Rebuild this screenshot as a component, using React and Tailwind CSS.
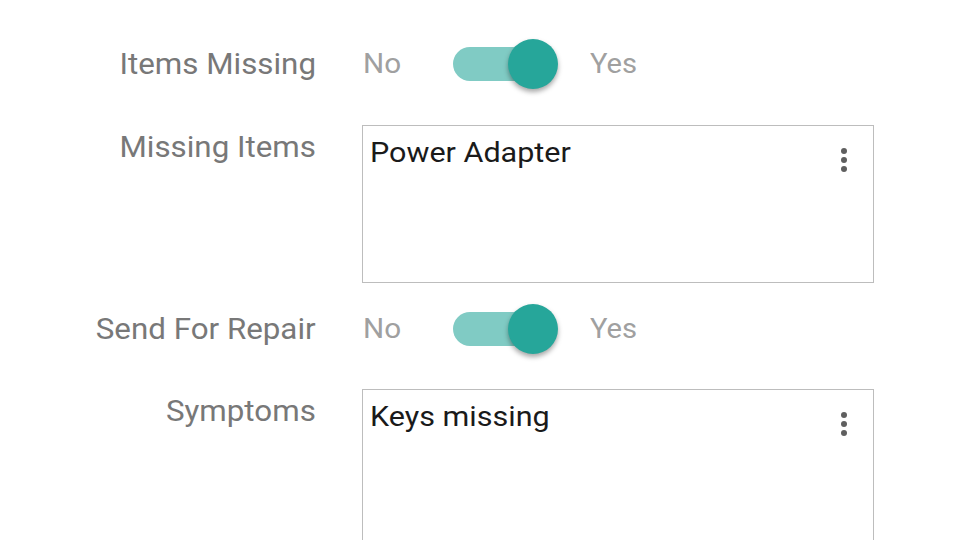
import React from "react";

const font = { fontFamily: "Roboto, 'Noto Sans', sans-serif" };

function Toggle() {
  return (
    <div className="relative w-[104px] h-[50px] flex items-center">
      <div className="absolute left-0 top-[8px] w-[92px] h-[34px] rounded-full bg-[#80cbc4]" />
      <div className="absolute left-[55px] top-0 w-[50px] h-[50px] rounded-full bg-[#26a69a] shadow-[0_3px_5px_rgba(0,0,0,0.35)]" />
    </div>
  );
}

function Dots() {
  return (
    <div className="flex flex-col gap-[3px] items-center">
      <span className="block w-[6px] h-[6px] rounded-full bg-[#5f5f5f]" />
      <span className="block w-[6px] h-[6px] rounded-full bg-[#5f5f5f]" />
      <span className="block w-[6px] h-[6px] rounded-full bg-[#5f5f5f]" />
    </div>
  );
}

function ToggleRow({ label }) {
  return (
    <div className="flex items-center h-[56px]">
      <div className="w-[316px] text-right text-[29px] leading-[34px] text-[#787878]">
        <span className="inline-block origin-right scale-x-[1.08]">{label}</span>
      </div>
      <div className="ml-[47px] flex items-center">
        <span className="text-[27px] leading-[34px] text-[#a0a0a0] w-[90px]">
          <span className="inline-block origin-left scale-x-[1.1]">No</span>
        </span>
        <Toggle />
        <span className="ml-[33px] text-[27px] leading-[34px] text-[#a0a0a0]">
          <span className="inline-block origin-left scale-x-[1.08]">Yes</span>
        </span>
      </div>
    </div>
  );
}

function AreaRow({ label, value }) {
  return (
    <div className="flex items-start">
      <div className="w-[316px] text-right text-[29px] leading-[34px] text-[#787878] pt-[5px]">
        <span className="inline-block origin-right scale-x-[1.08]">{label}</span>
      </div>
      <div className="ml-[46px] w-[512px] h-[158px] border-[1.5px] border-[#bdbdbd] bg-white flex justify-between pl-[7px] pr-[26px] pt-[10px]">
        <span className="text-[28px] leading-[34px] text-[#1a1a1a]">
          <span className="inline-block origin-left scale-x-[1.09]">{value}</span>
        </span>
        <div className="pt-[12px]">
          <Dots />
        </div>
      </div>
    </div>
  );
}

export default function App() {
  return (
    <div className="w-[960px] h-[540px] overflow-hidden bg-white pt-[36px]" style={font}>
      <ToggleRow label="Items Missing" />
      <div className="mt-[33px]">
        <AreaRow label="Missing Items" value="Power Adapter" />
      </div>
      <div className="mt-[18px]">
        <ToggleRow label="Send For Repair" />
      </div>
      <div className="mt-[32px]">
        <AreaRow label="Symptoms" value="Keys missing" />
      </div>
    </div>
  );
}
